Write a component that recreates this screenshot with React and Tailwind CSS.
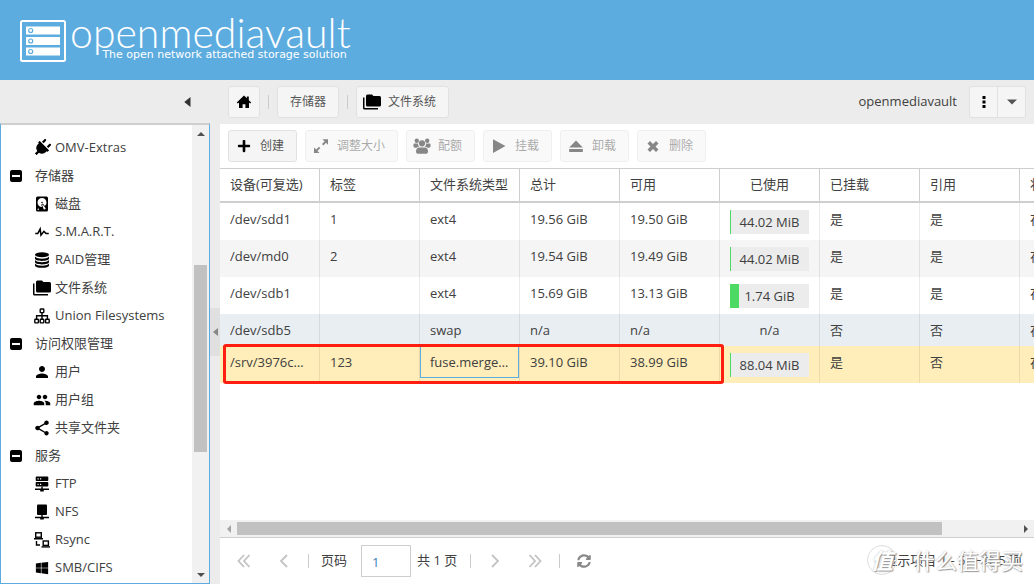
import React, { useState } from 'react';
import { FaPlug, FaPlus, FaWindows, FaSyncAlt } from 'react-icons/fa';
import { MdPerson, MdPeople, MdShare } from 'react-icons/md';

const Svg = ({ children, box = '0 0 24 24', className = 'size-4' }) => (
  <svg viewBox={box} className={className} fill="currentColor" aria-hidden="true">
    {children}
  </svg>
);

const FolderIcon = () => (
  <Svg className="size-[18px]">
    <path d="M22,4H14L12,2H6A2,2 0 0,0 4,4V16A2,2 0 0,0 6,18H22A2,2 0 0,0 24,16V6A2,2 0 0,0 22,4M2,6H0V20A2,2 0 0,0 2,22H20V20H2V6Z" />
  </Svg>
);

const DiskIcon = () => (
  <Svg className="size-[18px]">
    <path d="M6,2H18A2,2 0 0,1 20,4V20A2,2 0 0,1 18,22H6A2,2 0 0,1 4,20V4A2,2 0 0,1 6,2M12,4A6,6 0 0,0 6,10C6,13.31 8.69,16 12.1,16L11.22,13.77C10.95,13.29 11.11,12.68 11.59,12.4L12.45,11.9C12.93,11.63 13.54,11.79 13.82,12.27L15.74,14.69C17.12,13.59 18,11.9 18,10A6,6 0 0,0 12,4M12,9A1,1 0 0,1 13,10A1,1 0 0,1 12,11A1,1 0 0,1 11,10A1,1 0 0,1 12,9M7,18A1,1 0 0,0 6,19A1,1 0 0,0 7,20A1,1 0 0,0 8,19A1,1 0 0,0 7,18M12.09,13.27L14.58,19.58L17.17,18.08L12.95,12.77L12.09,13.27Z" />
  </Svg>
);

const PulseIcon = () => (
  <Svg className="size-[18px]">
    <path d="M3,13H5.79L10.1,4.79L11.28,13.75L14.5,9.66L17.83,13H21V15H17L14.67,12.67L9.92,18.73L8.94,11.31L7,15H3V13Z" />
  </Svg>
);

const RaidIcon = () => (
  <Svg box="0 0 16 16">
    <ellipse cx="8" cy="2.8" rx="7" ry="2.5" />
    <path d="M1 4.6c1 1.6 4 2.1 7 2.1s6-.5 7-2.1v2c0 1.400-3 2.400-7 2.400s-7-1-7-2.400z" />
    <path d="M1 8.100c1 1.600 4 2.100 7 2.100s6-.5 7-2.100v2c0 1.400-3 2.400-7 2.400s-7-1-7-2.400z" />
    <path d="M1 11.600c1 1.600 4 2.100 7 2.100s6-.5 7-2.100v1.800c0 1.400-3 2.400-7 2.400s-7-1-7-2.400z" />
  </Svg>
);

const UnionIcon = () => (
  <svg viewBox="0 0 16 16" className="size-4" fill="none" stroke="currentColor" strokeWidth="1.4" aria-hidden="true">
    <rect x="6.2" y="1" width="3.600" height="3.600" rx=".6" />
    <rect x=".8" y="11.300" width="3.600" height="3.600" rx=".6" />
    <rect x="6.200" y="11.300" width="3.600" height="3.600" rx=".6" />
    <rect x="11.600" y="11.300" width="3.600" height="3.600" rx=".6" />
    <path d="M8 4.600v6.700M2.600 11.300V7.800h10.800v3.500" />
  </svg>
);

const FtpIcon = () => (
  <Svg box="0 0 16 16">
    <path fillRule="evenodd" d="M2.500.5h11a.8.8 0 0 1 .8.8v3a.8.8 0 0 1-.8.8h-11a.8.8 0 0 1-.8-.8v-3a.8.8 0 0 1 .8-.8zM3.500 2.200v1.200h1.200V2.200zM6 2.200v1.200h1.200V2.200z" />
    <path fillRule="evenodd" d="M2.500 6h11a.8.8 0 0 1 .8.8v3a.8.8 0 0 1-.8.8h-11a.8.8 0 0 1-.8-.8v-3a.8.8 0 0 1 .8-.8zM3.500 7.700v1.200h1.200V7.700zM6 7.700v1.200h1.200V7.700z" />
    <path d="M7.300 10.500h1.400v2H15v1.600H9.800v1.400H6.200v-1.400H1v-1.600h6.300z" />
  </Svg>
);

const NfsIcon = () => (
  <Svg box="0 0 16 16">
    <rect x="3" y=".5" width="10" height="10.500" rx="1" />
    <path d="M7.300 11h1.400v1.700H15v1.500H9.800v1.300H6.200v-1.300H1v-1.500h6.300z" />
  </Svg>
);

const RsyncIcon = () => (
  <svg viewBox="0 0 16 16" className="size-4" fill="none" stroke="currentColor" strokeWidth="1.400" aria-hidden="true">
    <rect x="1.700" y=".8" width="5.600" height="4.400" />
    <path d="M0 6.700h9M2.500 9v4h3.500" />
    <rect x="9.200" y="9" width="5.200" height="4.400" />
    <path d="M7.500 14.900H16" />
  </svg>
);

const HomeIcon = () => (
  <Svg box="0 0 16 16">
    <path d="M8 1.500 .8 8.500l.9 1L3 8.400V14h3.600v-3.800h2.800V14H13V8.400l1.300 1.100.9-1-2.400-2.300V2.500h-1.900v1.800z" />
  </Svg>
);

const ResizeIcon = () => (
  <Svg box="0 0 16 16">
    <path d="M9.500 1.300H15v5.500l-2-2-2.600 2.600L9 6l2.600-2.600zM6 8.800l1.300 1.300-2.800 2.800 2 2H1V9.400l2.200 2.200z" />
  </Svg>
);

const GroupIcon = () => (
  <Svg box="0 0 18 16" className="h-4 w-[18px] shrink-0">
    <circle cx="3.800" cy="2.700" r="2.200" />
    <circle cx="14.200" cy="2.700" r="2.200" />
    <circle cx="9" cy="5.300" r="3.100" />
    <path d="M1 5.500h3.800C5 7 5.500 8 6.300 8.600 5 8.700 4.200 9.200 3.700 9.800H2C1 9.800.4 9 .4 7.800.4 6.500.6 5.500 1 5.500zM17 5.500h-3.800c-.2 1.500-.7 2.500-1.500 3.100 1.300.1 2.100.6 2.600 1.200H16c1 0 1.600-.8 1.600-2 0-1.300-.2-2.300-.6-2.300z" />
    <path d="M6 9.400h6c2 0 3 1.800 3 4 0 1.600-1 2.400-2.300 2.400H5.300C4 15.800 3 15 3 13.400c0-2.200 1-4 3-4z" />
  </Svg>
);

const PlayIcon = () => (
  <Svg box="0 0 16 16">
    <path d="M2 1.200 14.500 8 2 15z" />
  </Svg>
);

const EjectIcon = () => (
  <Svg box="0 0 16 16">
    <path d="M8 2.500 14.800 9.500H1.200zM1.200 11h13.600v3H1.200z" />
  </Svg>
);

const CrossIcon = () => (
  <Svg box="0 0 16 16">
    <path d="m5 3 3 3 3-3 2.500 2.500-3 3 3 3L11 14l-3-3-3 3-2.500-2.500 3-3-3-3z" />
  </Svg>
);

const Triangle = ({ d, className = 'size-2' }) => (
  <svg viewBox="0 0 8 8" className={className} fill="currentColor" aria-hidden="true">
    <path d={d} />
  </svg>
);

const LEFT = 'M6 0v8L2 4z';
const RIGHT = 'M2 0v8l4-4z';
const UP = 'M0 6h8L4 2z';
const DOWN = 'M0 2h8L4 6z';

const menu = [
  { icon: <FaPlug className="size-[18px] rotate-45" />, label: 'OMV-Extras' },
  { group: true, label: '存储器' },
  { icon: <DiskIcon />, label: '磁盘' },
  { icon: <PulseIcon />, label: 'S.M.A.R.T.' },
  { icon: <RaidIcon />, label: 'RAID管理' },
  { icon: <FolderIcon />, label: '文件系统' },
  { icon: <UnionIcon />, label: 'Union Filesystems' },
  { group: true, label: '访问权限管理' },
  { icon: <MdPerson className="size-[18px]" />, label: '用户' },
  { icon: <MdPeople className="size-[18px]" />, label: '用户组' },
  { icon: <MdShare className="size-[18px]" />, label: '共享文件夹' },
  { group: true, label: '服务' },
  { icon: <FtpIcon />, label: 'FTP' },
  { icon: <NfsIcon />, label: 'NFS' },
  { icon: <RsyncIcon />, label: 'Rsync' },
  { icon: <FaWindows className="size-[14px]" />, label: 'SMB/CIFS' },
];

const actions = [
  { icon: <FaPlus className="size-[14px]" />, label: '创建' },
  { icon: <ResizeIcon />, label: '调整大小', disabled: true },
  { icon: <GroupIcon />, label: '配额', disabled: true },
  { icon: <PlayIcon />, label: '挂载', disabled: true },
  { icon: <EjectIcon />, label: '卸载', disabled: true },
  { icon: <CrossIcon />, label: '删除', disabled: true },
];

const columns = ['设备(可复选)', '标签', '文件系统类型', '总计', '可用', '已使用', '已挂载', '引用', '状态'];

const rows = [
  { device: '/dev/sdd1', label: '1', type: 'ext4', total: '19.56 GiB', free: '19.50 GiB', used: '44.02 MiB', percent: 1, mounted: '是', ref: '是', bg: 'bg-white' },
  { device: '/dev/md0', label: '2', type: 'ext4', total: '19.54 GiB', free: '19.49 GiB', used: '44.02 MiB', percent: 1, mounted: '是', ref: '是', bg: 'bg-[#f5f5f5]' },
  { device: '/dev/sdb1', label: '', type: 'ext4', total: '15.69 GiB', free: '13.13 GiB', used: '1.74 GiB', percent: 11, mounted: '是', ref: '是', bg: 'bg-white' },
  { device: '/dev/sdb5', label: '', type: 'swap', total: 'n/a', free: 'n/a', used: 'n/a', mounted: '否', ref: '否', bg: 'bg-[#e9eef2]' },
  { device: '/srv/3976c62d', label: '123', type: 'fuse.mergerfs', total: '39.10 GiB', free: '38.99 GiB', used: '88.04 MiB', percent: 1, mounted: '是', ref: '否', bg: 'bg-[#ffeeb9]', selected: true },
];

const Header = () => (
  <header className="flex h-20 shrink-0 items-center gap-1 bg-[#5dacdf] pt-0.5 pl-5 text-white">
    <svg viewBox="0 0 46 42" className="h-[42px] w-[46px] shrink-0" aria-hidden="true">
      <rect x="1" y="1" width="44" height="40" rx="1.500" fill="none" stroke="white" strokeWidth="2" />
      {[6.500, 17, 27.500].map((y) => (
        <g key={y}>
          <rect x="6" y={y} width="34" height="8" fill="white" />
          <circle cx="10.700" cy={y + 4} r="2" fill="none" stroke="#5dacdf" strokeWidth="1.200" />
        </g>
      ))}
    </svg>
    <div className="flex flex-col items-end pb-1">
      <div className="font-['Lato'] text-[41px] leading-8 font-light">openmediavault</div>
      <div className="pr-1 font-['DejaVu_Sans'] text-[11px] leading-3">The open network attached storage solution</div>
    </div>
  </header>
);

const Button = ({ icon, label, disabled }) => (
  <button
    disabled={disabled}
    className="flex h-8 items-center rounded-[3px] border border-[#e1e1e1] bg-[#f5f5f5] pr-3 pl-[7px] text-[12px] text-[#555] disabled:opacity-50"
  >
    <span className={disabled ? 'mr-2 flex w-4 justify-center text-[#111]' : 'mr-2 flex w-4 justify-center text-black'}>{icon}</span>
    {label}
  </button>
);

const Separator = () => <span className="h-[14px] w-px bg-[#cbcbcb]" />;

const Sidebar = () => (
  <aside className="flex w-[210px] shrink-0 flex-col">
    <div className="flex h-[43px] shrink-0 items-center justify-end pr-4">
      <button aria-label="Collapse" className="flex size-3 items-center justify-center text-[#333]">
        <Triangle d="M6 0v8L1 4z" className="size-[10px]" />
      </button>
    </div>
    <div className="flex min-h-0 flex-1 border border-t-2 border-[#5dacdf] border-t-[#cecece] bg-white">
      <nav className="min-w-0 flex-1 overflow-hidden">
        <ul className="pt-[9px]">
          {menu.map((item) => (
            <li key={item.label}>
              <a href="#" className={item.group ? 'flex h-7 items-center pl-[9px]' : 'flex h-7 items-center pl-8'}>
                {item.group ? (
                  <span className="mr-[13px] flex size-3 items-center justify-center rounded-[2px] bg-black">
                    <span className="h-[2px] w-2 bg-white" />
                  </span>
                ) : (
                  <span className="mr-1 flex w-[18px] justify-center text-black">{item.icon}</span>
                )}
                <span>{item.label}</span>
              </a>
            </li>
          ))}
        </ul>
      </nav>
      <div className="flex w-[17px] flex-col items-center bg-[#f1f1f1]">
        <span className="flex h-[17px] items-center text-[#505050]"><Triangle d={UP} /></span>
        <div className="min-h-0 w-[13px] flex-1">
          <div className="h-[29%]" />
          <div className="h-[44%] bg-[#c1c1c1]" />
        </div>
        <span className="flex h-[17px] items-center text-[#505050]"><Triangle d={DOWN} /></span>
      </div>
    </div>
  </aside>
);

const Breadcrumbs = () => (
  <div className="flex h-11 shrink-0 items-center gap-2 px-2 text-[12px] text-[#555]">
    <button aria-label="Home" className="flex size-8 items-center justify-center rounded-[3px] border border-[#e1e1e1] bg-[#f5f5f5] text-black">
      <HomeIcon />
    </button>
    <Separator />
    <button className="h-8 rounded-[3px] border border-[#e1e1e1] bg-[#f5f5f5] px-3">存储器</button>
    <Separator />
    <Button icon={<span className="-mx-1"><FolderIcon /></span>} label="文件系统" />
    <span className="ml-auto pr-1 text-[13px] text-[#404040]">openmediavault</span>
    <div className="flex h-8 rounded-[3px] border border-[#e1e1e1] bg-[#f5f5f5]">
      <button aria-label="Menu" className="flex w-7 items-center justify-center border-r border-[#e1e1e1] text-black">
        <Svg box="0 0 16 16">
          <path d="M6.500 2h3v3h-3zM6.500 6.500h3v3h-3zM6.500 11h3v3h-3z" />
        </Svg>
      </button>
      <button aria-label="More" className="flex w-[27px] items-center justify-center text-[#555]">
        <Triangle d="M0 2h8L4 6z" className="size-[10px]" />
      </button>
    </div>
  </div>
);

const Cell = ({ children, className = '' }) => (
  <td className={`relative border-r border-black/8 px-[10px] py-[6px] align-top ${className}`}>
    <div className="truncate leading-5">{children}</div>
  </td>
);

const UsedCell = ({ row }) => {
  if (row.percent === undefined) return <Cell className="text-center">{row.used}</Cell>;
  return (
    <td className="border-r border-black/8 px-[10px] pt-[7px] pb-[6px] align-top">
      <div className="relative h-6 bg-[#ececec] text-center leading-6">
        <div className="absolute inset-y-0 left-0 bg-[#4cd964]" style={{ width: `${row.percent}%`, minWidth: 1 }} />
        <span className="relative">{row.used}</span>
      </div>
    </td>
  );
};

const Grid = () => (
  <div className="relative min-h-0 flex-1 overflow-hidden">
    <table className="w-[900px] table-fixed border-separate border-spacing-0">
      <thead>
        <tr>
          {columns.map((name) => (
            <th
              key={name}
              className={`h-[35px] border-t border-r border-b-2 border-[#cecece] px-[10px] font-normal whitespace-nowrap ${name === '已使用' ? 'text-center' : 'text-left'}`}
            >
              {name}
            </th>
          ))}
        </tr>
      </thead>
      <tbody>
        {rows.map((row) => (
          <tr key={row.device} className={row.bg}>
            <Cell>{row.device}</Cell>
            <Cell>{row.label}</Cell>
            <Cell>
              {row.type}
              {row.selected && <span className="absolute top-0 left-0 h-8 w-full border border-[#5dacdf]" />}
            </Cell>
            <Cell>{row.total}</Cell>
            <Cell>{row.free}</Cell>
            <UsedCell row={row} />
            <Cell>{row.mounted}</Cell>
            <Cell>{row.ref}</Cell>
            <Cell>在线</Cell>
          </tr>
        ))}
      </tbody>
    </table>
    <div className="pointer-events-none absolute top-[176px] left-[3px] h-10 w-[501px] rounded-[3px] border-3 border-[#ff1e10]" />
  </div>
);

const PagerButton = ({ label, children }) => (
  <button aria-label={label} className="flex size-8 items-center justify-center text-[#c3c3c3]">
    {children}
  </button>
);

const Chevron = ({ d }) => (
  <svg viewBox="0 0 16 16" className="size-4" fill="none" stroke="currentColor" strokeWidth="1.800" aria-hidden="true">
    <path d={d} />
  </svg>
);

const Watermark = () => (
  <div className="pointer-events-none absolute top-1 right-[11px] flex items-center gap-4 text-white [text-shadow:1px_1px_1px_#999,0_0_2px_#bbb]">
    <span className="flex size-[30px] items-center justify-center rounded-full border border-[#ddd] text-[22px] font-bold italic">值</span>
    <span className="text-[22px] leading-9">什么值得买</span>
  </div>
);

const Pager = () => {
  const [page, setPage] = useState('1');

  return (
    <footer className="relative flex h-[47px] shrink-0 items-center border-t border-[#cecece] bg-white px-2">
      <div className="flex items-center gap-2">
        <PagerButton label="First page"><Chevron d="M8 2 2.500 8 8 14M13.500 2 8 8l5.500 6" /></PagerButton>
        <PagerButton label="Previous page"><Chevron d="M11 2 5 8l6 6" /></PagerButton>
        <Separator />
      </div>
      <label htmlFor="page" className="ml-3 pr-[14px]">页码</label>
      <input
        id="page"
        value={page}
        onChange={(e) => setPage(e.target.value)}
        className="h-8 w-[50px] border border-[#cecece] bg-white px-[10px] pt-[2px] text-[#3a83b5] outline-none"
      />
      <span className="mr-[13px] ml-[6px]">共 1 页</span>
      <div className="flex items-center gap-2">
        <Separator />
        <PagerButton label="Next page"><Chevron d="M5 2l6 6-6 6" /></PagerButton>
        <PagerButton label="Last page"><Chevron d="M2.500 2 8 8l-5.500 6M8 2l5.500 6L8 14" /></PagerButton>
        <Separator />
        <button aria-label="Refresh" className="flex size-8 items-center justify-center text-[#888]">
          <FaSyncAlt className="size-[14px]" />
        </button>
      </div>
      <span className="ml-auto pr-1">显示项目 1 - 5 一共 5 项</span>
      <Watermark />
    </footer>
  );
};

const App = () => (
  <div className="flex h-screen flex-col overflow-hidden bg-[#ececec] font-['Open_Sans','Noto_Sans_CJK_SC',sans-serif] text-[13px] text-[#404040]">
    <Header />
    <div className="flex min-h-0 flex-1">
      <Sidebar />
      <div className="flex w-[10px] shrink-0 flex-col items-center justify-center">
        <button aria-label="Toggle sidebar" className="flex h-12 w-full items-center justify-center bg-[#e0e0e0] text-[#888]">
          <Triangle d="M7 0v8L2 4z" />
        </button>
      </div>
      <main className="flex min-w-0 flex-1 flex-col">
        <Breadcrumbs />
        <div className="flex min-h-0 flex-1 flex-col bg-white">
          <div className="flex h-11 shrink-0 items-center gap-2 px-2">
            {actions.map((action) => (
              <Button key={action.label} {...action} />
            ))}
          </div>
          <Grid />
          <div className="flex h-[17px] shrink-0 items-center bg-[#f1f1f1]">
            <span className="flex w-[17px] justify-center text-[#a3a3a3]"><Triangle d={LEFT} /></span>
            <div className="h-[13px] flex-1">
              <div className="h-full w-47/52 bg-[#c1c1c1]" />
            </div>
            <span className="flex w-[17px] justify-center text-[#505050]"><Triangle d={RIGHT} /></span>
          </div>
          <Pager />
        </div>
      </main>
    </div>
  </div>
);

export default App;
